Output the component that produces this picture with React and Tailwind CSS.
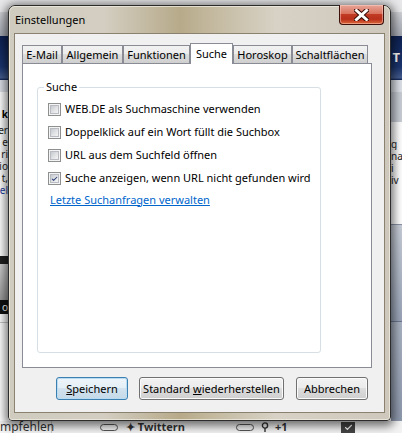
import { Check } from 'lucide-react'

const tabs = [
  { label: 'E-Mail', w: 'w-[40px]' },
  { label: 'Allgemein', w: 'w-[61px]' },
  { label: 'Funktionen', w: 'w-[67px]' },
  { label: 'Suche', w: 'w-[43px]', active: true },
  { label: 'Horoskop', w: 'w-[59px]' },
  { label: 'Schaltflächen', w: 'w-[76px]' },
]

const options = [
  { label: 'WEB.DE als Suchmaschine verwenden', checked: false },
  { label: 'Doppelklick auf ein Wort füllt die Suchbox', checked: false },
  { label: 'URL aus dem Suchfeld öffnen', checked: false },
  { label: 'Suche anzeigen, wenn URL nicht gefunden wird', checked: true },
]

function CheckBox({ checked }) {
  return (
    <span className="flex h-[13px] w-[13px] shrink-0 items-center justify-center border border-[#8e8f8f] bg-[#f4f4f4]">
      <span className="flex h-[9px] w-[9px] items-center justify-center border border-[#b8bcc2] bg-[linear-gradient(135deg,#c6cad0_0%,#e4e5e7_60%,#f4f4f4_100%)]">
        {checked && <Check size={10} strokeWidth={3.5} className="text-[#2c3f79]" />}
      </span>
    </span>
  )
}

function Button({ children, primary, className }) {
  return (
    <button
      className={`flex h-[23px] items-center justify-center whitespace-nowrap rounded-[3px] border text-[11px] leading-none text-black ${
        primary
          ? 'border-[#3c7fb1] bg-[linear-gradient(#eef5fa_0%,#e3eef6_50%,#d2e2ee_50%,#c5d9e8_100%)] shadow-[inset_0_0_0_1px_#b9dcf2]'
          : 'border-[#707070] bg-[linear-gradient(#f2f2f2_0%,#ebebeb_50%,#dddddd_50%,#cfcfcf_100%)] shadow-[inset_0_0_0_1px_#fbfbfb]'
      } ${className}`}
    >
      {children}
    </button>
  )
}

// cut-off text of the web page lying behind the dialog
function Clip({ lines, side, className }) {
  return (
    <div className={`flex flex-col overflow-hidden ${className}`}>
      {lines.map((t, i) => (
        <div key={i} className={`flex h-[12px] overflow-hidden whitespace-nowrap ${side === 'left' ? 'justify-end' : 'justify-start'}`}>
          <span className="block h-[12px] text-[10px] leading-[12px]">{t}</span>
        </div>
      ))}
    </div>
  )
}

export default function App() {
  return (
    <div className="relative h-[433px] w-[402px] overflow-hidden bg-white font-['Noto_Sans',sans-serif] text-black">
      {/* page behind */}
      <div className="flex h-full flex-col">
        <div className="h-[12px] bg-[#e8e8ea]" />
        <div className="h-[24px] bg-[linear-gradient(#cfd1d5,#a4a8b1)]" />
        <div className="flex h-[44px] items-center justify-end bg-[linear-gradient(#0d2152,#1b356f_70%,#445c8f_95%,#0d2152)] pr-[2px]">
          <span className="text-[13px] font-bold text-white">T</span>
        </div>
        <div className="h-[12px] bg-[#dde1e8]" />
        <div className="flex flex-1 justify-between">
          <div className="flex w-[8px] flex-col">
            <Clip side="left" className="mt-[16px] font-bold" lines={['k']} />
            <Clip side="left" className="mt-[4px] text-[#222]" lines={['er', 'e', 'ri', 'io', 't,']} />
            <Clip side="left" className="text-[#1a3aa0]" lines={['el']} />
            <div className="mt-[60px] h-[8px] bg-[#202020]" />
            <div className="h-[36px] bg-[linear-gradient(#d0d0d0,#9a9a9a)]" />
            <div className="flex h-[14px] items-center justify-end overflow-hidden bg-[#111] text-[10px] leading-none text-white">
              <span>o</span>
            </div>
            <div className="mt-[8px] h-px bg-[#c8c8c8]" />
          </div>
          <div className="flex w-[11px] flex-col">
            <div className="h-[30px] bg-[#c9ced6]" />
            <Clip side="right" className="mt-[16px] text-[#222]" lines={['g', 'na', 'i', 'iv']} />
            <div className="mt-[38px] h-px bg-[#8a93a5]" />
            <div className="h-[96px] bg-[linear-gradient(#c8ced8,#9aa5b8)]" />
            <div className="h-px bg-[#6d7890]" />
            <div className="flex-1 bg-[linear-gradient(#aab3c2,#8e99ad)]" />
          </div>
        </div>
        <div className="flex h-[12px] items-center bg-[#f3f3f3] text-[#333]">
          <span className="w-[52px] whitespace-nowrap border-r border-[#c8c8c8] text-[12px] leading-[12px]">mpfehlen</span>
          <span className="ml-[48px] h-[7px] w-[18px] rounded-full border border-[#555]" />
          <span className="ml-[8px] whitespace-nowrap text-[11px] font-bold leading-[12px]">✦ Twittern</span>
          <span className="ml-[51px] h-[7px] w-[18px] rounded-full border border-[#555]" />
          <svg className="ml-[7px]" width="8" height="10" viewBox="0 0 8 10">
            <circle cx="4" cy="3.5" r="2.6" fill="none" stroke="#333" strokeWidth="1.4" />
            <path d="M4 6 V10" stroke="#333" strokeWidth="1.4" />
          </svg>
          <span className="ml-[6px] text-[11px] font-bold leading-[12px]">+1</span>
          <span className="ml-[54px] flex h-[11px] w-[14px] items-center justify-center bg-[#444]">
            <Check size={9} strokeWidth={3} className="text-white" />
          </span>
        </div>
      </div>

      {/* dialog window */}
      <div className="absolute left-[8px] top-[5px] flex h-[416px] w-[383px] flex-col rounded-t-[7px] rounded-b-[4px] border border-[#2c2c2c] bg-[linear-gradient(90deg,#cfcbbf_0%,#d3cec1_25%,#b7aa8a_45%,#c2b79c_52%,#d7d2c5_70%,#cdc8bb_100%)] shadow-[0_2px_10px_3px_rgba(0,0,0,0.55)]">
        <div className="flex flex-1 flex-col rounded-t-[6px] rounded-b-[3px] border border-[#f3efe4]/70 px-[4px] pb-[6px]">
          <div className="flex h-[26px] items-start">
            <span className="ml-[1px] mt-[5px] text-[11px] leading-[16px] text-black">Einstellungen</span>
            <div className="relative -mt-[2px] ml-auto mr-[1px] flex h-[20px] w-[45px] items-center justify-center rounded-b-[4px] border border-t-0 border-[#3d100b] bg-[linear-gradient(#e7a597_0%,#d9735f_45%,#c13a24_50%,#b8301b_75%,#dd6a3a_100%)] shadow-[inset_0_0_0_1px_rgba(255,210,200,0.5)]">
              <svg width="15" height="12" viewBox="0 0 15 12">
                <path d="M2.5 1.5 L12.5 10.5 M12.5 1.5 L2.5 10.5" stroke="#3b0d08" strokeWidth="5" strokeLinecap="square" />
                <path d="M2.5 1.5 L12.5 10.5 M12.5 1.5 L2.5 10.5" stroke="#ffffff" strokeWidth="3" strokeLinecap="square" />
              </svg>
            </div>
          </div>

          <div className="flex flex-1 flex-col border border-[#8a826f] bg-[#f0f0f0] pl-[7px] pt-[9px]">
            <div className="w-[350px]">
              <div className="flex h-[20px] items-end">
                {tabs.map((t) =>
                  t.active ? (
                    <div
                      key={t.label}
                      className={`relative z-10 -mb-px flex h-[21px] items-start justify-center border border-b-0 border-[#898c95] bg-white pt-[2px] text-[11px] leading-[15px] ${t.w}`}
                    >
                      {t.label}
                    </div>
                  ) : (
                    <div
                      key={t.label}
                      className={`flex h-[18px] items-center justify-center whitespace-nowrap border border-b-0 border-[#898c95] bg-[linear-gradient(#f2f2f2_0%,#ebebeb_50%,#dddddd_50%,#cfcfcf_100%)] text-[11px] leading-none ${t.w}`}
                    >
                      {t.label}
                    </div>
                  )
                )}
              </div>
              <div className="h-[305px] border border-[#898c95] bg-white">
                <div className="relative ml-[14px] mt-[23px] h-[266px] w-[284px] rounded-[3px] border border-[#d5dfe5] pl-[10px] pt-[10px]">
                  <span className="absolute -top-[9px] left-[6px] bg-white px-[2px] text-[11px] leading-[16px]">Suche</span>
                  {options.map((o) => (
                    <label key={o.label} className="flex h-[23px] items-center gap-[4px] text-[11px]">
                      <CheckBox checked={o.checked} />
                      <span className="whitespace-nowrap">{o.label}</span>
                    </label>
                  ))}
                  <div className="ml-[2px] flex h-[20px] items-center">
                    <a href="#" className="text-[11px] text-[#0066cc] underline">
                      Letzte Suchanfragen verwalten
                    </a>
                  </div>
                </div>
              </div>
            </div>

            <div className="mt-[9px] flex">
              <Button primary className="ml-[34px] w-[72px]">
                <span><span className="underline">S</span>peichern</span>
              </Button>
              <Button className="ml-[11px] w-[145px]">
                <span>Standard <span className="underline">w</span>iederherstellen</span>
              </Button>
              <Button className="ml-[12px] w-[72px]">Abbrechen</Button>
            </div>
          </div>
        </div>
      </div>
    </div>
  )
}
